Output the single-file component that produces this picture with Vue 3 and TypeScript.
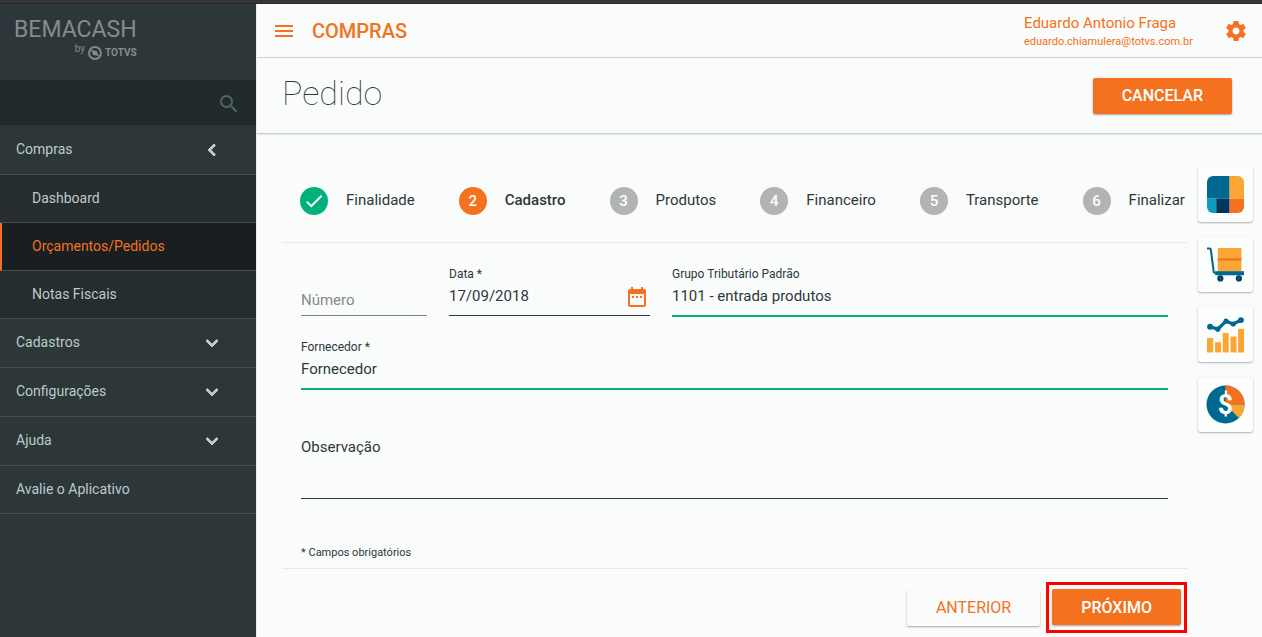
<script setup lang="ts">
import { ref } from 'vue'

interface Step {
  label: string
  state: 'done' | 'current' | 'pending'
}

const subItems = ['Dashboard', 'Orçamentos/Pedidos', 'Notas Fiscais']
const activeItem = ref('Orçamentos/Pedidos')
const groups = ['Cadastros', 'Configurações', 'Ajuda']

const steps: Step[] = [
  { label: 'Finalidade', state: 'done' },
  { label: 'Cadastro', state: 'current' },
  { label: 'Produtos', state: 'pending' },
  { label: 'Financeiro', state: 'pending' },
  { label: 'Transporte', state: 'pending' },
  { label: 'Finalizar', state: 'pending' },
]

const search = ref('')
const numero = ref('')
const data = ref('17/09/2018')
const grupo = ref('1101 - entrada produtos')
const fornecedor = ref('Fornecedor')
const observacao = ref('')
</script>

<template>
  <div class="page">
    <div class="topline"></div>
    <div class="shell">
      <aside class="sidebar">
        <div class="brand">
          <div class="brand-box">
            <span class="brand-name">BEMACASH</span>
            <span class="brand-by">
              <span class="by">by</span>
              <svg class="totvs-mark" viewBox="0 0 14 14" aria-hidden="true">
                <circle cx="7" cy="7" r="6" fill="none" stroke="currentColor" stroke-width="1.8" />
                <path d="M4.2 4.2 9.2 5.2 9.8 9.8 4.8 8.8Z" fill="currentColor" />
                <path d="M1.5 4.5 5 5.2M12.5 9.5 9 8.8" stroke="currentColor" stroke-width="1.2" />
              </svg>
              <span class="totvs">TOTVS</span>
            </span>
          </div>
        </div>
        <div class="search">
          <input v-model="search" type="text" aria-label="Pesquisar" />
          <button type="button" class="icon-btn" aria-label="Buscar">
            <svg viewBox="0 0 24 24"><path d="M15.5 14h-.79l-.28-.27A6.47 6.47 0 0 0 16 9.5 6.5 6.5 0 1 0 9.5 16c1.61 0 3.09-.59 4.23-1.57l.27.28v.79l5 4.99L20.49 19l-4.99-5zm-6 0C7.01 14 5 11.99 5 9.5S7.01 5 9.5 5 14 7.01 14 9.5 11.99 14 9.5 14z" /></svg>
          </button>
        </div>
        <nav class="menu">
          <button type="button" class="group group-open">
            <span>Compras</span>
            <svg viewBox="0 0 24 24"><path d="M15.41 7.41 14 6l-6 6 6 6 1.41-1.41L10.83 12z" /></svg>
          </button>
          <a
            v-for="item in subItems"
            :key="item"
            href="#"
            class="sub"
            :class="{ active: item === activeItem }"
            @click.prevent="activeItem = item"
          >{{ item }}</a>
          <button v-for="group in groups" :key="group" type="button" class="group">
            <span>{{ group }}</span>
            <svg viewBox="0 0 24 24"><path d="M7.41 8.59 12 13.17l4.59-4.58L18 10l-6 6-6-6z" /></svg>
          </button>
          <a href="#" class="group group-last" @click.prevent><span>Avalie o Aplicativo</span></a>
        </nav>
      </aside>

      <main class="main">
        <header class="header">
          <button type="button" class="icon-btn" aria-label="Menu">
            <svg viewBox="0 0 24 24"><path d="M3 18h18v-2H3v2zm0-5h18v-2H3v2zm0-7v2h18V6H3z" /></svg>
          </button>
          <span class="module">COMPRAS</span>
          <div class="user">
            <span class="user-name">Eduardo Antonio Fraga</span>
            <span class="user-mail">eduardo.chiamulera@totvs.com.br</span>
          </div>
          <button type="button" class="icon-btn" aria-label="Ajustes">
            <svg viewBox="0 0 24 24"><path d="M19.43 12.98c.04-.32.07-.64.07-.98s-.03-.66-.07-.98l2.11-1.65c.19-.15.24-.42.12-.64l-2-3.46c-.12-.22-.39-.3-.61-.22l-2.49 1c-.52-.4-1.08-.73-1.69-.98l-.38-2.65A.488.488 0 0 0 14 2h-4c-.25 0-.46.18-.49.42l-.38 2.65c-.61.25-1.17.59-1.69.98l-2.49-1c-.23-.09-.49 0-.61.22l-2 3.46c-.13.22-.07.49.12.64l2.11 1.65c-.04.32-.07.65-.07.98s.03.66.07.98l-2.11 1.65c-.19.15-.24.42-.12.64l2 3.46c.12.22.39.3.61.22l2.49-1c.52.4 1.08.73 1.69.98l.38 2.65c.03.24.24.42.49.42h4c.25 0 .46-.18.49-.42l.38-2.65c.61-.25 1.17-.59 1.69-.98l2.49 1c.23.09.49 0 .61-.22l2-3.46c.12-.22.07-.49-.12-.64l-2.11-1.65zM12 15.5c-1.93 0-3.5-1.57-3.5-3.5s1.57-3.5 3.5-3.5 3.5 1.57 3.5 3.5-1.57 3.5-3.5 3.5z" /></svg>
          </button>
        </header>

        <section class="title-bar">
          <h1>Pedido</h1>
          <button type="button" class="btn btn-primary">CANCELAR</button>
        </section>

        <div class="content">
          <form class="wizard" @submit.prevent>
            <ol class="steps">
              <li v-for="(step, i) in steps" :key="step.label" :class="step.state">
                <span class="bullet">
                  <svg v-if="step.state === 'done'" viewBox="0 0 24 24"><path d="M9 16.17 4.83 12l-1.42 1.41L9 19 21 7l-1.41-1.41z" /></svg>
                  <template v-else>{{ i + 1 }}</template>
                </span>
                <span class="step-label">{{ step.label }}</span>
              </li>
            </ol>

            <div class="fields">
              <div class="row">
                <div class="field field-empty">
                  <input v-model="numero" type="text" placeholder="Número" aria-label="Número" />
                </div>
                <div class="field">
                  <label for="data">Data *</label>
                  <input id="data" v-model="data" type="text" />
                  <button type="button" class="icon-btn calendar" aria-label="Abrir calendário">
                    <svg viewBox="0 0 24 24"><path d="M9 11H7v2h2v-2zm4 0h-2v2h2v-2zm4 0h-2v2h2v-2zm2-7h-1V2h-2v2H8V2H6v2H5c-1.11 0-1.99.9-1.99 2L3 20c0 1.1.89 2 2 2h14c1.1 0 2-.9 2-2V6c0-1.1-.9-2-2-2zm0 16H5V9h14v11z" /></svg>
                  </button>
                </div>
                <div class="field valid">
                  <label for="grupo">Grupo Tributário Padrão</label>
                  <input id="grupo" v-model="grupo" type="text" />
                </div>
              </div>
              <div class="field valid">
                <label for="fornecedor">Fornecedor *</label>
                <input id="fornecedor" v-model="fornecedor" type="text" />
              </div>
              <div class="notes">
                <label for="observacao">Observação</label>
                <textarea id="observacao" v-model="observacao" rows="2"></textarea>
              </div>
              <p class="hint">* Campos obrigatórios</p>
            </div>

            <footer class="actions">
              <button type="button" class="btn btn-flat">ANTERIOR</button>
              <span class="highlight">
                <button type="submit" class="btn btn-primary">PRÓXIMO</button>
              </span>
            </footer>
          </form>

          <aside class="shortcuts">
            <button type="button" aria-label="Painel">
              <svg viewBox="0 0 36 36">
                <clipPath id="tile"><rect width="36" height="36" rx="6" /></clipPath>
                <g clip-path="url(#tile)">
                  <rect width="22" height="22" fill="#00698f" />
                  <rect x="22" width="14" height="22" fill="#fba634" />
                  <rect y="22" width="9" height="14" fill="#0d9bc0" />
                  <rect x="9" y="22" width="13" height="14" fill="#003560" />
                  <rect x="22" y="22" width="14" height="14" fill="#f47120" />
                </g>
              </svg>
            </button>
            <button type="button" aria-label="Pedidos">
              <svg viewBox="0 0 36 36">
                <path d="M0 2.5h2.5q1 0 1.2 1L6.5 25q.2 1 1.2 1H9" fill="none" stroke="#00698f" stroke-width="2" />
                <rect x="10.5" y="2" width="23" height="22.5" rx="1" fill="#fba634" />
                <rect x="10.5" y="12" width="23" height="2.2" fill="#f47120" />
                <rect x="8" y="24.5" width="28" height="4" fill="#00698f" />
                <circle cx="13" cy="31.5" r="3" fill="#003f66" />
                <circle cx="31" cy="31.5" r="3" fill="#003f66" />
                <circle cx="13" cy="31.5" r="1" fill="#00698f" />
                <circle cx="31" cy="31.5" r="1" fill="#00698f" />
              </svg>
            </button>
            <button type="button" aria-label="Relatórios">
              <svg viewBox="0 0 36 36">
                <g fill="#fba634">
                  <rect y="21.5" width="6" height="14" />
                  <rect x="7.8" y="25.5" width="5.8" height="10" />
                  <rect x="15.3" y="16.5" width="5.8" height="19" />
                  <rect x="22.9" y="20" width="5.8" height="15.5" />
                  <rect x="30.2" y="12.5" width="5.8" height="23" />
                </g>
                <path d="M3 10.5 10.5 12.8 18.5 5 25.5 7.8 33 4" fill="none" stroke="#00698f" stroke-width="3.2" />
                <g fill="#00698f">
                  <circle cx="3" cy="10.5" r="2.9" />
                  <circle cx="10.5" cy="12.8" r="2.5" />
                  <circle cx="18.5" cy="5" r="2.5" />
                  <circle cx="25.5" cy="7.8" r="2.5" />
                  <circle cx="33" cy="4" r="2.9" />
                </g>
              </svg>
            </button>
            <button type="button" aria-label="Financeiro">
              <svg viewBox="0 0 36 36">
                <circle cx="18" cy="18" r="18.5" fill="#00698f" />
                <path d="M18 18V-.5A18.5 18.5 0 0 1 36.5 18Z" fill="#f47120" />
                <path d="M18 18H36.5A18.5 18.5 0 0 1 31 31.2Z" fill="#fba634" />
                <text x="18" y="27" text-anchor="middle" font-size="26" font-weight="700" fill="#fff">$</text>
              </svg>
            </button>
          </aside>
        </div>
      </main>
    </div>
  </div>
</template>

<style>
body {
  margin: 0;
  background: #fafcfc;
}
</style>

<style scoped>
.page {
  display: flex;
  flex-direction: column;
  min-height: 100vh;
  background: #fafcfc;
  color: #2d3739;
  font-family: Roboto, "Liberation Sans", sans-serif;
  font-size: 15px;
}
.page *,
.page {
  box-sizing: border-box;
}
button,
input,
textarea {
  margin: 0;
  padding: 0;
  border: 0;
  background: none;
  color: inherit;
  font: inherit;
  outline: 0;
}
button {
  cursor: pointer;
}
svg {
  display: block;
  fill: currentColor;
  overflow: visible;
}
.icon-btn,
.icon-btn svg {
  width: 24px;
  height: 24px;
  flex: none;
}
.topline {
  height: 4px;
  background: #36353b;
  border-bottom: 1px solid #28272c;
}
.shell {
  display: flex;
  flex: 1;
}

/* Sidebar */
.sidebar {
  width: 256px;
  flex: none;
  background: #2d3739;
  color: #bdcbca;
}
.brand {
  height: 76px;
  padding: 12px 14px;
  color: #838c8d;
}
.brand-box {
  display: inline-flex;
  flex-direction: column;
  align-items: flex-end;
}
.brand-name {
  font-size: 23px;
  line-height: 28px;
}
.brand-by {
  display: flex;
  align-items: center;
  gap: 3px;
  line-height: 18px;
}
.by {
  font-size: 10px;
  line-height: 10px;
  align-self: flex-start;
}
.totvs-mark {
  width: 14px;
  height: 14px;
}
.totvs {
  font-size: 10px;
  font-weight: 700;
}
.search {
  display: flex;
  align-items: center;
  height: 45px;
  padding: 2px 15px 0 16px;
  background: #22292b;
  color: #4d6767;
}
.search input {
  flex: 1;
  min-width: 0;
  height: 32px;
}
.menu {
  display: flex;
  flex-direction: column;
  font-size: 14px;
}
.group,
.sub {
  display: flex;
  align-items: center;
  height: 49px;
  border-bottom: 1px solid #484c4c;
  color: inherit;
  text-align: left;
  text-decoration: none;
}
.group {
  justify-content: space-between;
  padding: 0 32px 0 16px;
}
.group span {
  padding-bottom: 2px;
}
.group-open {
  height: 50px;
}
.group-last {
  height: 48px;
}
.group svg {
  width: 24px;
  height: 24px;
  stroke: currentColor;
  stroke-width: 1;
}
.sub {
  height: 48px;
  padding: 0 0 2px 32px;
  background: #252d2f;
}
.sub.active {
  padding-left: 30px;
  border-left: 2px solid #f47120;
  background: #191f20;
  color: #f47120;
}

/* Header */
.main {
  display: flex;
  flex: 1;
  min-width: 0;
  flex-direction: column;
  border-left: 1px solid #e8eaea;
}
.header {
  display: flex;
  align-items: center;
  height: 54px;
  padding: 0 14px 0 15px;
  border-bottom: 1px solid #cdd0d0;
  color: #f47120;
}
.module {
  margin-left: 16px;
  font-size: 20px;
  font-weight: 500;
}
.user {
  display: flex;
  flex-direction: column;
  min-width: 173px;
  margin-left: auto;
  margin-right: 27px;
  padding-top: 2px;
}
.user-name {
  line-height: 20px;
}
.user-mail {
  font-size: 11px;
  line-height: 18px;
}
.title-bar {
  display: flex;
  align-items: center;
  justify-content: space-between;
  height: 76px;
  padding: 0 30px 0 25px;
  border-bottom: 1px solid #cdd0d0;
  box-shadow: 0 1px 1px #e4e7e7;
}
h1 {
  margin: 0;
  padding-bottom: 6px;
  font-size: 34px;
  line-height: 42px;
  font-weight: 100;
}
.btn {
  height: 36px;
  padding: 0 29px;
  border-radius: 2px;
  box-shadow: 0 1px 2px rgba(0, 0, 0, 0.35);
  font-size: 16px;
  font-weight: 400;
}
.btn-primary {
  background: #f47120;
  color: #fff;
  font-weight: 500;
}
.btn-flat {
  color: #f47120;
}

/* Wizard */
.content {
  display: flex;
  gap: 11px;
  padding: 0 9px 0 25px;
}
.wizard {
  flex: 1;
  min-width: 0;
}
.steps {
  display: flex;
  justify-content: space-between;
  margin: 0;
  padding: 53px 2px 27px 18px;
  border-bottom: 1px solid #e6e9e9;
  list-style: none;
}
.steps li {
  display: flex;
  gap: 18px;
}
.bullet {
  display: flex;
  align-items: center;
  justify-content: center;
  width: 28px;
  height: 28px;
  border-radius: 50%;
  background: #b2b4b4;
  color: #fff;
  font-weight: 500;
}
.bullet svg {
  width: 22px;
  height: 22px;
}
.step-label {
  line-height: 26px;
}
.done .bullet {
  background: #00b17b;
}
.current .bullet {
  background: #f47120;
}
.current .step-label {
  font-weight: 500;
}
.fields {
  padding: 22px 19px 7px;
}
.row {
  display: grid;
  grid-template-columns: 126fr 201fr 496fr;
  gap: 22px;
  margin-bottom: 21px;
}
.field {
  position: relative;
  display: flex;
  flex-direction: column;
  height: 52px;
}
.field label {
  font-size: 12px;
  line-height: 18px;
}
.field input {
  width: 100%;
  height: 33px;
  padding-bottom: 6px;
  border-bottom: 1px solid #2d3739;
}
.field.valid input {
  height: 34px;
  border-color: #00b17b;
  border-bottom-width: 2px;
}
.field-empty input {
  height: 51px;
  padding: 20px 0 0;
  border-color: #7c8182;
}
.field-empty input::placeholder {
  color: #858a8b;
  opacity: 1;
}
.calendar {
  position: absolute;
  right: 1px;
  bottom: 8px;
  color: #f47120;
}
.notes {
  display: flex;
  flex-direction: column;
  margin-top: 45px;
}
.notes label {
  line-height: 24px;
}
.notes textarea {
  height: 40px;
  resize: none;
  border-bottom: 1px solid #2d3739;
}
.hint {
  margin: 0;
  padding-top: 46px;
  font-size: 11px;
  line-height: 16px;
}
.actions {
  display: flex;
  align-items: center;
  justify-content: flex-end;
  gap: 6px;
  padding: 13px 0 4px;
  border-top: 1px solid #e6e9e9;
}
.highlight {
  padding: 4px 3px 5px;
  border: 3px solid #ff0000;
}
.highlight .btn {
  display: block;
}

/* Shortcuts */
.shortcuts {
  display: flex;
  flex-direction: column;
  gap: 15px;
  padding-top: 33px;
}
.shortcuts button {
  display: flex;
  align-items: center;
  justify-content: center;
  width: 55px;
  height: 55px;
  padding: 0;
  border-radius: 3px;
  background: #fcfdfd;
  box-shadow: 0 1px 2px rgba(0, 0, 0, 0.3);
}
.shortcuts svg {
  width: 37px;
  height: 37px;
}
</style>
